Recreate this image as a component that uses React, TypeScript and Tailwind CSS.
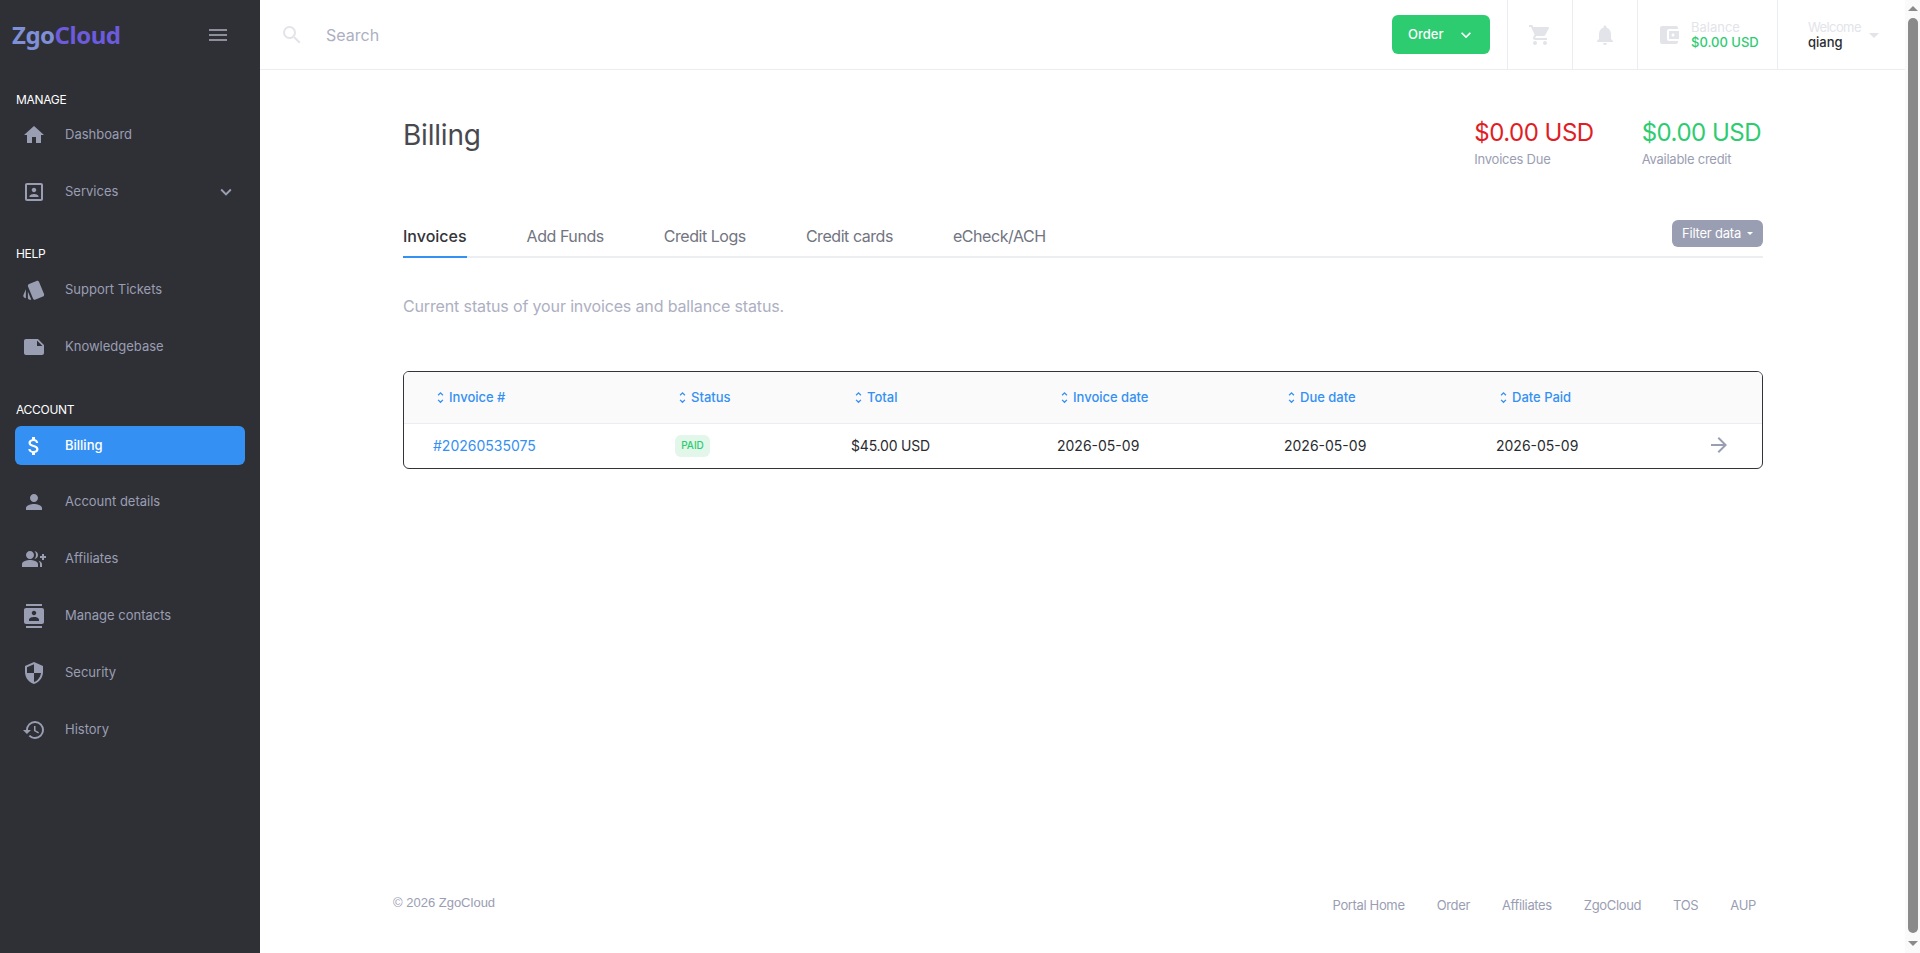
import {
  MdAccountBalanceWallet,
  MdArrowDropDown,
  MdArrowForward,
  MdAttachMoney,
  MdContacts,
  MdGroupAdd,
  MdHistory,
  MdHome,
  MdKeyboardArrowDown,
  MdMenu,
  MdNote,
  MdNotifications,
  MdPerson,
  MdPortrait,
  MdSearch,
  MdSecurity,
  MdShoppingCart,
  MdUnfoldMore,
} from "react-icons/md";
import type { IconType } from "react-icons";

interface NavItem {
  label: string;
  icon: IconType | typeof TicketIcon;
  active?: boolean;
  chevron?: boolean;
}

// material "style" without the little hole in the card
function TicketIcon({ className }: { className?: string }) {
  return (
    <svg viewBox="0 0 24 24" fill="currentColor" className={className}>
      <path d="M2.53 19.65l1.34.56v-9.03l-2.43 5.86c-.41 1.02.08 2.19 1.09 2.61zm19.5-3.7L17.07 3.98c-.31-.75-1.04-1.21-1.81-1.23-.26 0-.53.04-.79.15L7.1 5.95c-.75.31-1.21 1.03-1.23 1.8-.01.27.04.54.15.8l4.96 11.97c.31.76 1.05 1.22 1.83 1.23.26 0 .52-.05.77-.15l7.36-3.05c1.02-.42 1.51-1.59 1.09-2.6zM5.88 19.75c0 1.1.9 2 2 2h1.45l-3.45-8.34v6.34z" />
    </svg>
  );
}

const navGroups: { title: string; className: string; firstRow: string; items: NavItem[] }[] = [
  {
    title: "MANAGE",
    className: "mt-[22px]",
    firstRow: "pt-[6px] pb-[9px]",
    items: [
      { label: "Dashboard", icon: MdHome },
      { label: "Services", icon: MdPortrait, chevron: true },
    ],
  },
  {
    title: "HELP",
    className: "mt-[25px]",
    firstRow: "pt-[7px] pb-[9px]",
    items: [
      { label: "Support Tickets", icon: TicketIcon },
      { label: "Knowledgebase", icon: MdNote },
    ],
  },
  {
    title: "ACCOUNT",
    className: "mt-[26px]",
    firstRow: "pt-[7px] pb-[8px]",
    items: [
      { label: "Billing", icon: MdAttachMoney, active: true },
      { label: "Account details", icon: MdPerson },
      { label: "Affiliates", icon: MdGroupAdd },
      { label: "Manage contacts", icon: MdContacts },
      { label: "Security", icon: MdSecurity },
      { label: "History", icon: MdHistory },
    ],
  },
];

const tabs = ["Invoices", "Add Funds", "Credit Logs", "Credit cards", "eCheck/ACH"];
const footerLinks = ["Portal Home", "Order", "Affiliates", "ZgoCloud", "TOS", "AUP"];
const columns = ["Invoice #", "Status", "Total", "Invoice date", "Due date", "Date Paid"];
const rowGrid = "grid grid-cols-[242px_176px_206px_227px_212px_1fr] items-center pl-[29px]";

function Sidebar() {
  return (
    <aside className="w-[260px] shrink-0 bg-[#2f3036] flex flex-col">
      <div className="h-[69px] flex items-center justify-between pl-[12px] pr-[30px]">
        <span className="text-[24px] font-bold leading-none tracking-[-0.5px] font-['Noto_Sans',sans-serif]">
          <span className="text-[#7f8fd8]">Zgo</span>
          <span className="text-[#6c5bdc]">Cloud</span>
        </span>
        <MdMenu className="w-[24px] h-[24px] text-[#8d8f9b]" />
      </div>
      {navGroups.map((group) => (
        <div key={group.title} className={group.className}>
          <div className="pl-[16px] h-[18px] flex items-center text-[12px] text-white tracking-[-0.3px]">{group.title}</div>
          <div>
            {group.items.map((item, i) => (
              <div key={item.label} className={i === 0 ? group.firstRow : "py-[9px]"}>
                <div
                  className={`mx-[15px] h-[39px] flex items-center rounded-[6px] text-[13px] ${
                    item.active ? "bg-[#3590f3] text-white font-medium" : "text-[#9a9eb2]"
                  }`}
                >
                  <span className="w-[50px] pl-[7px] flex shrink-0">
                    <item.icon className="w-[24px] h-[24px]" />
                  </span>
                  <span className="flex-1">{item.label}</span>
                  {item.chevron && <MdKeyboardArrowDown className="w-[22px] h-[22px] mr-[8px]" />}
                </div>
              </div>
            ))}
          </div>
        </div>
      ))}
    </aside>
  );
}

function Header() {
  return (
    <header className="h-[70px] shrink-0 border-b border-[#ebedf2] flex items-center">
      <MdSearch className="ml-[20px] w-[24px] h-[24px] text-[#e3e4ea]" />
      <span className="ml-[22px] text-[16px] text-[#adafc2] flex-1">Search</span>
      <button className="w-[98px] h-[39px] rounded-[6px] bg-[#2ecc71] text-white text-[13px] font-medium flex items-center pl-[16px] mr-[17px]">
        Order
        <MdKeyboardArrowDown className="ml-[13px] w-[20px] h-[20px]" />
      </button>
      <div className="w-[65px] h-full border-l border-[#ebedf2] flex items-center justify-center">
        <MdShoppingCart className="w-[24px] h-[24px] text-[#e3e4ea]" />
      </div>
      <div className="w-[65px] h-full border-l border-[#ebedf2] flex items-center justify-center">
        <MdNotifications className="w-[24px] h-[24px] text-[#e3e4ea]" />
      </div>
      <div className="w-[140px] h-full border-l border-[#ebedf2] flex items-center pl-[19px]">
        <MdAccountBalanceWallet className="w-[24px] h-[24px] text-[#e3e4ea]" />
        <div className="ml-[10px] text-[13px] leading-[15px]">
          <div className="text-[#e3e4ea]">Balance</div>
          <div className="text-[#2ecc71] font-medium">$0.00 USD</div>
        </div>
      </div>
      <div className="w-[128px] h-full border-l border-[#ebedf2] flex items-center pl-[30px]">
        <div className="text-[13px] leading-[15px]">
          <div className="text-[#e3e4ea] tracking-[-0.6px]">Welcome</div>
          <div className="text-[#2a2b30] font-medium">qiang</div>
        </div>
        <MdArrowDropDown className="w-[24px] h-[24px] text-[#e3e4ea] ml-[1px]" />
      </div>
    </header>
  );
}

function InvoiceTable() {
  return (
    <div className="mt-[54px] border border-[#33343a] rounded-[6px] overflow-hidden">
      <div className={`h-[52px] bg-[#fafafa] border-b border-[#ebedf2] text-[13px] font-medium text-[#3590f3] ${rowGrid}`}>
        {columns.map((col) => (
          <div key={col} className="flex items-center">
            <MdUnfoldMore className="w-[15px] h-[15px] mr-[1px]" />
            {col}
          </div>
        ))}
      </div>
      <div className={`h-[44px] pb-[2px] text-[14px] text-[#2a2b30] ${rowGrid}`}>
        <div className="text-[#3590f3]">#20260535075</div>
        <div>
          <span className="inline-flex items-center justify-center w-[35px] h-[22px] rounded-[6px] bg-[#e2f7ea] text-[#2ecc71] text-[10px] font-medium">
            PAID
          </span>
        </div>
        <div className="tracking-[-0.2px]">$45.00 USD</div>
        <div>2026-05-09</div>
        <div>2026-05-09</div>
        <div className="flex items-center justify-between pr-[31px]">
          2026-05-09
          <MdArrowForward className="w-[24px] h-[24px] text-[#9a9eb2]" />
        </div>
      </div>
    </div>
  );
}

export default function App() {
  return (
    <div className="h-[953px] flex overflow-hidden bg-white font-['Inter',sans-serif]">
      <Sidebar />
      <main className="flex-1 flex flex-col min-w-0">
        <Header />
        <div className="flex-1 flex flex-col pl-[143px] pr-[142px]">
          <div className="flex justify-between pt-[46px]">
            <h1 className="text-[28px] leading-[38px] text-[#48494f] tracking-[-0.2px]">Billing</h1>
            <div className="flex gap-[48px] mr-[2px]">
              <div>
                <div className="text-[24px] leading-[34px] text-[#e01e26] tracking-[-0.5px]">$0.00 USD</div>
                <div className="text-[13px] leading-[18px] text-[#9a9eb2] tracking-[-0.25px]">Invoices Due</div>
              </div>
              <div>
                <div className="text-[24px] leading-[34px] text-[#2ecc71] tracking-[-0.5px]">$0.00 USD</div>
                <div className="text-[13px] leading-[18px] text-[#9a9eb2] tracking-[-0.25px]">Available credit</div>
              </div>
            </div>
          </div>
          <div className="mt-[45px] h-[45px] border-b-2 border-[#edeef2] flex items-end justify-between">
            <div className="flex gap-[60px]">
              {tabs.map((tab, i) => (
                <div
                  key={tab}
                  className={`pb-[6px] -mb-[2px] text-[16px] leading-[27px] ${
                    i === 0 ? "font-medium text-[#33343a] border-b-2 border-[#3590f3]" : "text-[#72747f] tracking-[-0.45px]"
                  }`}
                >
                  {tab}
                </div>
              ))}
            </div>
            <button className="mb-[9px] w-[91px] h-[27px] rounded-[6px] bg-[#9a9eb2] text-white text-[13px] tracking-[-0.2px] flex items-center justify-center gap-[6px]">
              Filter data
              <span className="w-0 h-0 border-x-[3px] border-x-transparent border-t-[3px] border-t-white" />
            </button>
          </div>
          <p className="mt-[37px] text-[16px] leading-[22px] text-[#adafc2] tracking-[-0.14px]">
            Current status of your invoices and ballance status.
          </p>
          <InvoiceTable />
          <div className="mt-auto h-[59px] -ml-[10px] pr-[7px] flex justify-between">
            <span className="text-[13px] font-['Liberation_Sans',sans-serif] text-[#9a9eb2] leading-[18px]">© 2026 ZgoCloud</span>
            <div className="flex gap-[32px] text-[13px] leading-[18px] text-[#9a9eb2] mt-[2px] tracking-[-0.35px]">
              {footerLinks.map((l) => (
                <span key={l}>{l}</span>
              ))}
            </div>
          </div>
        </div>
      </main>
      <div className="w-[15px] shrink-0 flex flex-col items-center bg-[#fafafa]">
        <span className="w-0 h-0 mt-[6px] border-x-[5px] border-x-transparent border-b-[5px] border-b-[#8a8a8a]" />
        <div className="w-[10px] flex-1 mt-[7px] rounded-[5px] bg-[#8a8a8a]" />
        <span className="w-0 h-0 mt-[8px] mb-[7px] border-x-[5px] border-x-transparent border-t-[5px] border-t-[#8a8a8a]" />
      </div>
    </div>
  );
}
